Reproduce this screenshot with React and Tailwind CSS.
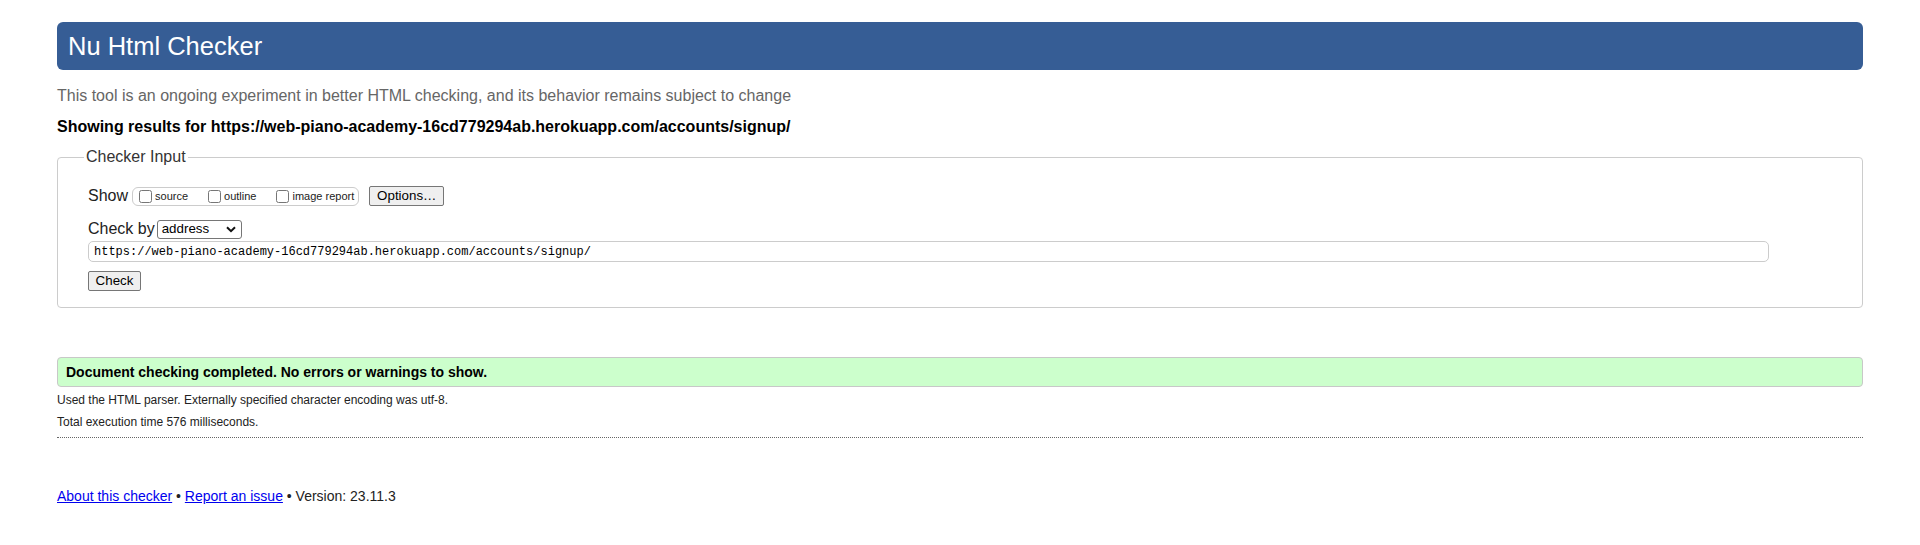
export default function App() {
    const options = [
        { name: 'source', gap: '' },
        { name: 'outline', gap: 'ml-[20px]' },
        { name: 'image report', gap: 'ml-[20px]' },
    ];

    return (
        <div className="min-h-[545px] bg-white px-[57px] pt-[22px] font-['Liberation_Sans',Arial,sans-serif] text-[#222]">
            {/* Title bar */}
            <h1 className="flex h-[48px] items-center rounded-[6px] bg-[#365d95] pl-[11px] text-[25.5px] text-white">
                Nu Html Checker
            </h1>

            <p className="mt-[17px] text-[16px] leading-[18px] text-[#666]">
                This tool is an ongoing experiment in better HTML checking, and its behavior remains subject to change
            </p>
            <p className="mt-[13px] text-[16px] font-bold leading-[18px] text-black">
                Showing results for https://web-piano-academy-16cd779294ab.herokuapp.com/accounts/signup/
            </p>

            {/* Checker input form */}
            <fieldset className="mt-[12px] rounded-[4px] border border-[#ccc] px-[30px] pb-[16px]">
                <legend className="-ml-[4px] px-[2px] text-[16px] leading-[18px] text-[#333]">Checker Input</legend>

                <div className="mt-[20px] flex h-[20px] items-center">
                    <span className="text-[16px] leading-[18px]">Show</span>
                    <div className="ml-[4px] flex h-[19px] items-center rounded-[6px] border border-[#ccc] pl-[6px] pr-[4px]">
                        {options.map(opt => (
                            <label key={opt.name} className={`flex items-center ${opt.gap}`}>
                                <input type="checkbox" className="m-0 h-[13px] w-[13px]" />
                                <span className="ml-[3px] text-[11px] leading-[13px]">{opt.name}</span>
                            </label>
                        ))}
                    </div>
                    <button type="button" className="ml-[10px] h-[20px] w-[75px] rounded-[2px] border border-[#767676] bg-[#efefef] text-[13.33px] leading-[16px] text-black">
                        Options…
                    </button>
                </div>

                <div className="mt-[13px] flex h-[20px] items-center">
                    <span className="text-[16px] leading-[18px]">Check by</span>
                    <div className="ml-[2px] flex h-[19px] w-[85px] items-center justify-between rounded-[3px] border border-[#767676] pl-[4px] pr-[5px] text-[13.33px] text-black">
                        <span>address</span>
                        <svg width="10" height="7" viewBox="0 0 10 7" fill="none">
                            <path d="M1 1.2 L5 5.2 L9 1.2" stroke="#111" strokeWidth="2" />
                        </svg>
                    </div>
                </div>

                <input
                    type="text"
                    readOnly
                    value="https://web-piano-academy-16cd779294ab.herokuapp.com/accounts/signup/"
                    className="mt-[2px] block h-[21px] w-[1681px] rounded-[5px] border border-[#ccc] pl-[5px] font-['Liberation_Mono',monospace] text-[12px] text-black outline-none"
                />

                <button type="button" className="mt-[9px] block h-[20px] w-[53px] rounded-[2px] border border-[#767676] bg-[#efefef] text-[13.33px] leading-[16px] text-black">
                    Check
                </button>
            </fieldset>

            {/* Result */}
            <div className="mt-[49px] flex h-[30px] items-center rounded-[4px] border border-[#c8c8c8] bg-[#ccffcc] pl-[8px] text-[14px] font-bold text-black">
                Document checking completed. No errors or warnings to show.
            </div>
            <p className="mt-[6px] text-[12px] leading-[14px]">
                Used the HTML parser. Externally specified character encoding was utf-8.
            </p>
            <p className="mt-[8px] text-[12px] leading-[14px]">Total execution time 576 milliseconds.</p>
            <hr className="mt-[8px] border-0 border-t border-dotted border-[#666]" />

            {/* Footer */}
            <p className="mt-[50px] text-[14px] leading-[16px]">
                <a href="#" className="text-[#0000ee] underline">About this checker</a>
                {' • '}
                <a href="#" className="text-[#0000ee] underline">Report an issue</a>
                {' • Version: 23.11.3'}
            </p>
        </div>
    );
}
